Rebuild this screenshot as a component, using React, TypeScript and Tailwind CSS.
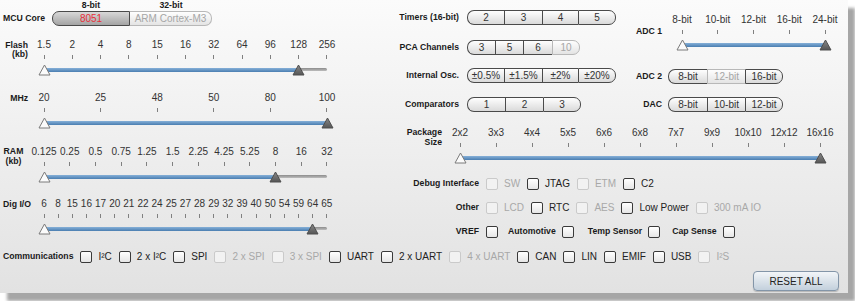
import React from 'react';
import clsx from 'clsx';

type SegItem = { label: string; w: string; sel?: boolean; dis?: boolean; noLeft?: boolean; right?: boolean };

const Seg = ({ items }: { items: SegItem[] }) => (
  <div className="flex h-[15px]">
    {items.map((it, i) => {
      const first = i === 0;
      const last = i === items.length - 1;
      return (
        <div
          key={it.label}
          className={clsx(
            'flex items-center justify-center border-y text-[10px] leading-none',
            it.w,
            !it.noLeft && 'border-l',
            (last || it.right) && 'border-r',
            first && 'rounded-l-[7px]',
            last && 'rounded-r-[7px]',
            it.dis ? 'border-[#b8b8b8]' : 'border-[#4a4a4a]',
            it.sel
              ? 'bg-gradient-to-b from-[#d8d8d8] to-[#a4a4a4] text-[#e8303a]'
              : it.dis
                ? 'bg-gradient-to-b from-[#fefefe] to-[#e4e4e4] text-[#a6a6a6]'
                : 'bg-gradient-to-b from-[#fefefe] to-[#dadada] text-[#333]'
          )}
        >
          {it.label}
        </div>
      );
    })}
  </div>
);

const Check = ({ label, dis }: { label: string; dis?: boolean }) => (
  <div className="flex items-center">
    <div
      className={clsx(
        'w-[12px] h-[12px] rounded-[2px] border',
        dis ? 'border-[#cacaca] bg-[#f2f2f2]' : 'border-[#3a3a3a] bg-gradient-to-b from-white to-[#e6e6e6]'
      )}
    />
    <span className={clsx('ml-[6px] text-[10px] leading-[12px] whitespace-nowrap', dis ? 'text-[#a8a8a8]' : 'text-[#222]')}>
      {label}
    </span>
  </div>
);

const Box = () => (
  <div className="w-[12px] h-[12px] rounded-[2px] border border-[#3a3a3a] bg-gradient-to-b from-white to-[#e6e6e6]" />
);

const Handle = ({ dark }: { dark?: boolean }) => (
  <svg width="13" height="12" viewBox="0 0 13 12">
    <defs>
      <linearGradient id="hd" x1="0" y1="0" x2="0" y2="1">
        <stop offset="0" stopColor="#8a8a8a" />
        <stop offset="1" stopColor="#555" />
      </linearGradient>
    </defs>
    <path
      d="M6.5 1 L12 11 H1 Z"
      fill={dark ? 'url(#hd)' : '#fbfbfb'}
      stroke={dark ? '#4e4e4e' : '#7a7a7a'}
      strokeWidth="1"
      strokeLinejoin="round"
    />
  </svg>
);

const Slider = ({ labels, value, span }: { labels: string[]; value: number; span: number }) => {
  const step = span / (labels.length - 1);
  const side = { marginLeft: -step / 2, marginRight: -step / 2 };
  return (
    <div className="relative" style={{ width: span }}>
      <div className="flex h-[12px]" style={side}>
        {labels.map((l) => (
          <div key={l} className="flex justify-center text-[10px] leading-[12px] text-[#333] whitespace-nowrap" style={{ width: step }}>
            {l}
          </div>
        ))}
      </div>
      <div className="flex mt-[4px] h-[4px]" style={side}>
        {labels.map((l) => (
          <div key={l} className="flex justify-center" style={{ width: step }}>
            <div className="w-px h-full bg-[#808080]" />
          </div>
        ))}
      </div>
      <div className="relative mt-[5px] h-[11px]">
        <div className="absolute left-0 right-0 top-[4px] h-[3px] rounded-full bg-gradient-to-b from-[#8c8c8c] to-[#bdbdbd]" />
        <div
          className="absolute left-0 top-[3.5px] h-[4px] rounded-full bg-gradient-to-b from-[#86b0d8] to-[#4a7eb1]"
          style={{ width: value * step }}
        />
        <div className="absolute top-0 -left-[6.5px]">
          <Handle />
        </div>
        <div className="absolute top-0" style={{ left: value * step - 6.5 }}>
          <Handle dark />
        </div>
      </div>
    </div>
  );
};

const bold = 'text-[8.7px] font-bold text-[#1a1a1a] whitespace-nowrap';

const App: React.FC = () => {
  return (
    <div className="w-[855px] h-[301px] bg-white font-['Liberation_Sans',Arial,sans-serif]">
      <div className="w-[848px] h-[293px] bg-gradient-to-b from-[#fbfbfb] to-[#e2e2e2] shadow-[7px_8px_3px_#a6a6a6] flex flex-col">
        <div className="flex">
          {/* Left column */}
          <div className="w-[395px] shrink-0 flex flex-col">
            <div className="flex">
              <div className={clsx(bold, 'w-[52px] pl-[3px] pt-[13px] leading-[10px]')}>MCU Core</div>
              <div>
                <div className={clsx(bold, 'flex h-[11px] leading-[10px]')}>
                  <div className="w-[78px] text-center">8-bit</div>
                  <div className="w-[82px] text-center">32-bit</div>
                </div>
                <Seg
                  items={[
                    { label: '8051', w: 'w-[78px]', sel: true, right: true },
                    { label: 'ARM Cortex-M3', w: 'w-[82px]', dis: true, noLeft: true },
                  ]}
                />
              </div>
            </div>

            <div className="mt-[13px] flex">
              <div className="w-[44px] shrink-0">
                <div className={clsx(bold, 'w-[28px] text-right leading-[9px] pt-[1.5px]')}>
                  <div>Flash</div>
                  <div>(kb)</div>
                </div>
              </div>
              <Slider labels={['1.5', '2', '4', '8', '15', '16', '32', '64', '96', '128', '256']} value={9} span={283} />
            </div>

            <div className="mt-[17px] flex">
              <div className="w-[44px] shrink-0">
                <div className={clsx(bold, 'w-[28px] text-right leading-[12px]')}>MHz</div>
              </div>
              <Slider labels={['20', '25', '48', '50', '80', '100']} value={5} span={283} />
            </div>

            <div className="mt-[18px] flex">
              <div className="w-[44px] shrink-0">
                <div className={clsx(bold, 'w-[27px] text-center leading-[10px]')}>
                  <div>RAM</div>
                  <div>(kb)</div>
                </div>
              </div>
              <Slider
                labels={['0.125', '0.25', '0.5', '0.75', '1.25', '1.5', '2.25', '4.25', '5.25', '8', '16', '32']}
                value={9}
                span={283}
              />
            </div>

            <div className="mt-[16px] flex">
              <div className="w-[44px] shrink-0">
                <div className={clsx(bold, 'pl-[3px] leading-[12px]')}>Dig I/O</div>
              </div>
              <Slider
                labels={['6', '8', '15', '16', '17', '20', '21', '22', '24', '25', '27', '28', '29', '32', '39', '40', '50', '54', '59', '64', '65']}
                value={19}
                span={283}
              />
            </div>
          </div>

          {/* Right column */}
          <div className="w-[453px] flex flex-col">
            <div className="flex">
              <div className="w-[235px] pt-[10px] flex flex-col">
                <div className="flex items-center h-[15px]">
                  <div className={clsx(bold, 'w-[64px] text-right')}>Timers (16-bit)</div>
                  <div className="ml-[8px]">
                    <Seg
                      items={[
                        { label: '2', w: 'w-[37px]' },
                        { label: '3', w: 'w-[38px]' },
                        { label: '4', w: 'w-[36px]' },
                        { label: '5', w: 'w-[38px]' },
                      ]}
                    />
                  </div>
                </div>
                <div className="mt-[15px] flex items-center h-[15px]">
                  <div className={clsx(bold, 'w-[64px] text-right')}>PCA Channels</div>
                  <div className="ml-[8px]">
                    <Seg
                      items={[
                        { label: '3', w: 'w-[28px]' },
                        { label: '5', w: 'w-[28px]' },
                        { label: '6', w: 'w-[29px]' },
                        { label: '10', w: 'w-[28px]', dis: true },
                      ]}
                    />
                  </div>
                </div>
                <div className="mt-[13px] flex items-center h-[15px]">
                  <div className={clsx(bold, 'w-[64px] text-right')}>Internal Osc.</div>
                  <div className="ml-[8px]">
                    <Seg
                      items={[
                        { label: '±0.5%', w: 'w-[37px]' },
                        { label: '±1.5%', w: 'w-[38px]' },
                        { label: '±2%', w: 'w-[36px]' },
                        { label: '±20%', w: 'w-[38px]' },
                      ]}
                    />
                  </div>
                </div>
                <div className="mt-[14px] flex items-center h-[15px]">
                  <div className={clsx(bold, 'w-[64px] text-right')}>Comparators</div>
                  <div className="ml-[8px]">
                    <Seg
                      items={[
                        { label: '1', w: 'w-[38px]' },
                        { label: '2', w: 'w-[38px]' },
                        { label: '3', w: 'w-[38px]' },
                      ]}
                    />
                  </div>
                </div>
              </div>

              <div className="w-[218px] flex flex-col">
                <div className="mt-[14px] flex">
                  <div className={clsx(bold, 'w-[52px] shrink-0 pl-[6px] pt-[12px] leading-[10px]')}>ADC 1</div>
                  <Slider labels={['8-bit', '10-bit', '12-bit', '16-bit', '24-bit']} value={4} span={143} />
                </div>
                <div className="mt-[19px] flex items-center h-[15px]">
                  <div className={clsx(bold, 'w-[38px] pr-[6px] text-right')}>ADC 2</div>
                  <Seg
                    items={[
                      { label: '8-bit', w: 'w-[39px]' },
                      { label: '12-bit', w: 'w-[38px]', dis: true },
                      { label: '16-bit', w: 'w-[38px]' },
                    ]}
                  />
                </div>
                <div className="mt-[13px] flex items-center h-[15px]">
                  <div className={clsx(bold, 'w-[38px] pr-[6px] text-right')}>DAC</div>
                  <Seg
                    items={[
                      { label: '8-bit', w: 'w-[39px]' },
                      { label: '10-bit', w: 'w-[38px]' },
                      { label: '12-bit', w: 'w-[38px]' },
                    ]}
                  />
                </div>
              </div>
            </div>

            <div className="mt-[15px] flex">
              <div className={clsx(bold, 'w-[65px] shrink-0 pr-[18px] text-right leading-[10px]')}>
                <div>Package</div>
                <div>Size</div>
              </div>
              <Slider
                labels={['2x2', '3x3', '4x4', '5x5', '6x6', '6x8', '7x7', '9x9', '10x10', '12x12', '16x16']}
                value={10}
                span={360}
              />
            </div>

            <div className="mt-[15px] flex items-center h-[12px]">
              <div className={clsx(bold, 'w-[84px] text-right')}>Debug Interface</div>
              <div className="ml-[7px] flex items-center gap-[7px]">
                <Check label="SW" dis />
                <Check label="JTAG" />
                <Check label="ETM" dis />
                <Check label="C2" />
              </div>
            </div>

            <div className="mt-[12px] flex items-center h-[12px]">
              <div className={clsx(bold, 'w-[84px] text-right')}>Other</div>
              <div className="ml-[7px] flex items-center gap-[7px]">
                <Check label="LCD" dis />
                <Check label="RTC" />
                <Check label="AES" dis />
                <Check label="Low Power" />
                <Check label="300 mA IO" dis />
              </div>
            </div>

            <div className="mt-[12px] flex items-center h-[12px]">
              <div className={clsx(bold, 'w-[84px] text-right')}>VREF</div>
              <div className="ml-[7px]"><Box /></div>
              <div className={clsx(bold, 'ml-[10px]')}>Automotive</div>
              <div className="ml-[6px]"><Box /></div>
              <div className={clsx(bold, 'ml-[14px]')}>Temp Sensor</div>
              <div className="ml-[6px]"><Box /></div>
              <div className={clsx(bold, 'ml-[12px]')}>Cap Sense</div>
              <div className="ml-[6px]"><Box /></div>
            </div>
          </div>
        </div>

        {/* Communications */}
        <div className="mt-[13px] pl-[3px] flex items-center h-[12px]">
          <div className={bold}>Communications</div>
          <div className="ml-[7px] flex items-center gap-[7px]">
            <Check label="I²C" />
            <Check label="2 x I²C" />
            <Check label="SPI" />
            <Check label="2 x SPI" dis />
            <Check label="3 x SPI" dis />
            <Check label="UART" />
            <Check label="2 x UART" />
            <Check label="4 x UART" dis />
            <Check label="CAN" />
            <Check label="LIN" />
            <Check label="EMIF" />
            <Check label="USB" />
            <Check label="I²S" dis />
          </div>
        </div>

        <div className="mt-[8px] pr-[9px] flex justify-end">
          <button className="w-[86px] h-[20px] rounded-[4px] border border-[#8395a8] bg-gradient-to-b from-[#f2f5f8] to-[#c3d0dc] text-[10px] text-[#222] shadow-[0_1px_1px_rgba(0,0,0,0.2)]">
            RESET ALL
          </button>
        </div>
      </div>
    </div>
  );
};

export default App;
